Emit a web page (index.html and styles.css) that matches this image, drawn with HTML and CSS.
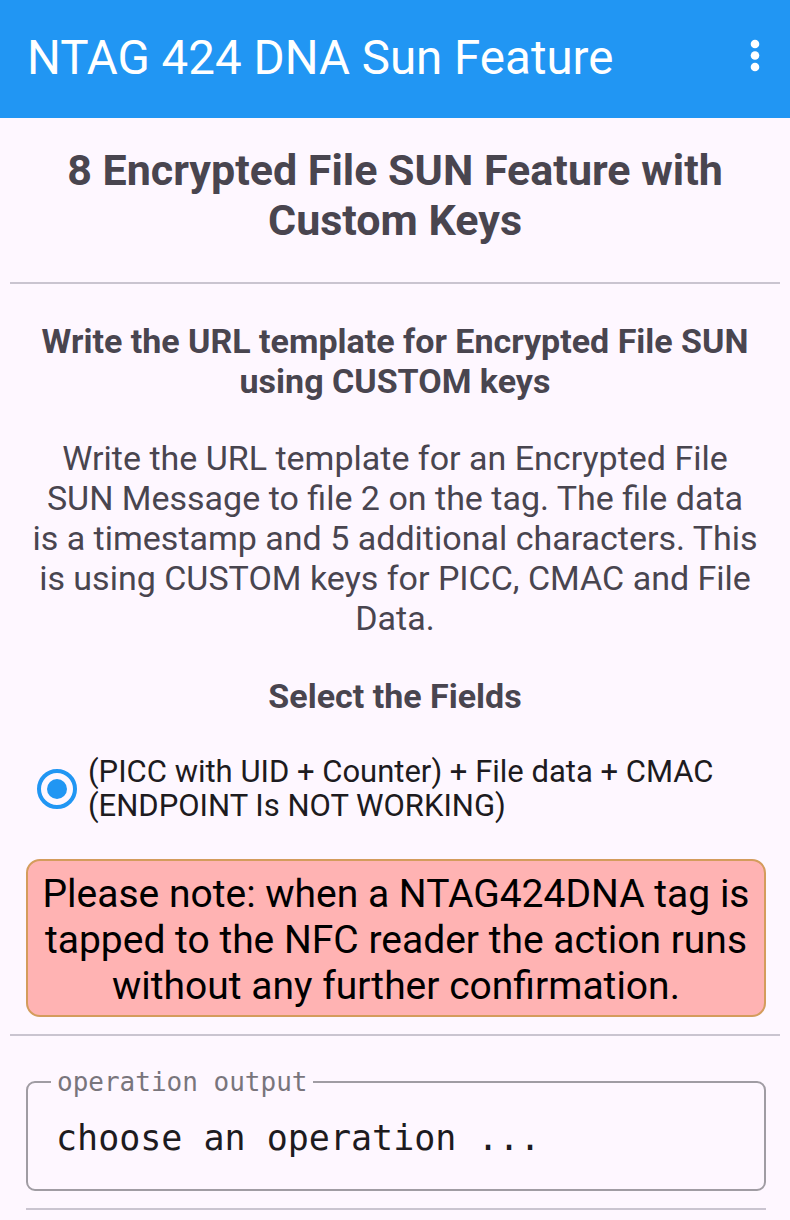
FILE: index.html
```html
<!DOCTYPE html>
<html>
<head>
<meta charset="utf-8">
<link rel="stylesheet" href="styles.css">
</head>
<body>
<header class="appbar">
  <h1 class="appbar-title">NTAG 424 DNA Sun Feature</h1>
  <div class="menu" aria-label="more options">
    <svg width="10" height="34" viewBox="0 0 10 34"><circle cx="5" cy="5" r="4.3" fill="#fff"/><circle cx="5" cy="16.5" r="4.3" fill="#fff"/><circle cx="5" cy="28" r="4.3" fill="#fff"/></svg>
  </div>
</header>
<main class="content">
  <h2 class="page-title">8 Encrypted File SUN Feature with Custom Keys</h2>
  <hr class="divider">
  <h3 class="section-title">Write the URL template for Encrypted File SUN using CUSTOM keys</h3>
  <p class="description">Write the URL template for an Encrypted File SUN Message to file 2 on the tag. The file data is a timestamp and 5 additional characters. This is using CUSTOM keys for PICC, CMAC and File Data.</p>
  <h3 class="fields-title">Select the Fields</h3>
  <label class="radio-row">
    <span class="radio"><span class="radio-dot"></span></span>
    <span class="radio-label">(PICC with UID + Counter) + File data + CMAC (ENDPOINT Is NOT WORKING)</span>
  </label>
  <div class="note">Please note: when a NTAG424DNA tag is tapped to the NFC reader the action runs without any further confirmation.</div>
  <hr class="divider divider-after-note">
  <fieldset class="output">
    <legend class="output-legend">operation output</legend>
    <div class="output-text">choose an operation ...</div>
  </fieldset>
  <hr class="divider divider-inset">
</main>
</body>
</html>
```

FILE: styles.css
```css
* { box-sizing: border-box; }
html, body { margin: 0; padding: 0; }
body {
  background: #fef7ff;
  font-family: Roboto, "Liberation Sans", sans-serif;
  width: 790px;
  height: 1220px;
  overflow: hidden;
}
.appbar {
  height: 118px;
  background: #2196f3;
  display: flex;
  align-items: center;
  justify-content: space-between;
  padding: 0 30px 2px 27px;
}
.appbar-title {
  margin: 0;
  color: #fff;
  font-weight: 400;
  font-size: 47.5px;
  letter-spacing: 0;
}
.menu { display: flex; align-items: center; margin-top: -4px; }
.content {
  padding: 0 10px;
  display: flex;
  flex-direction: column;
}
.page-title {
  margin: 27px 20px 0;
  text-align: center;
  color: #49454f;
  font-size: 43px;
  font-weight: 700;
  line-height: 50px;
}
.divider {
  margin: 37px 0 0;
  border: 0;
  height: 2px;
  background: #cac4d0;
}
.section-title {
  margin: 37px 20px 0;
  text-align: center;
  color: #49454f;
  font-size: 34px;
  font-weight: 700;
  line-height: 40px;
}
.description {
  margin: 37px 20px 0;
  text-align: center;
  color: #49454f;
  font-size: 34px;
  line-height: 40px;
}
.fields-title {
  margin: 38px 0 0;
  text-align: center;
  color: #49454f;
  font-size: 34px;
  font-weight: 700;
  line-height: 40px;
}
.radio-row {
  margin: 39px 0 0 27px;
  display: flex;
  align-items: center;
  gap: 11px;
}
.radio {
  width: 40px;
  height: 40px;
  border: 4px solid #2196f3;
  border-radius: 50%;
  display: flex;
  align-items: center;
  justify-content: center;
  flex: none;
}
.radio-dot {
  width: 20px;
  height: 20px;
  border-radius: 50%;
  background: #2196f3;
}
.radio-label {
  color: #1d1b20;
  font-size: 31px;
  line-height: 34px;
}
.note {
  margin: 36px 14px 0 16px;
  background: #ffb3b3;
  border: 2px solid #d49c5c;
  border-radius: 14px;
  padding: 10px 8px 6px;
  text-align: center;
  color: #000;
  font-size: 39px;
  line-height: 46px;
}
.divider-after-note { margin-top: 17px; }
.output {
  margin: 31px 14px 0 16px;
  border: 2px solid #a09ca3;
  border-radius: 9px;
  padding: 0 28px 31px;
}
.output-legend {
  padding: 0 6px;
  margin-left: -5px;
  font-family: "DejaVu Sans Mono", monospace;
  font-size: 26px;
  color: #79757c;
  line-height: 30px;
}
.output-text {
  margin-top: 21px;
  font-family: "DejaVu Sans Mono", monospace;
  font-size: 35px;
  color: #1d1b20;
  line-height: 40px;
}
.divider-inset { margin: 17px 14px 0 16px; }
```
